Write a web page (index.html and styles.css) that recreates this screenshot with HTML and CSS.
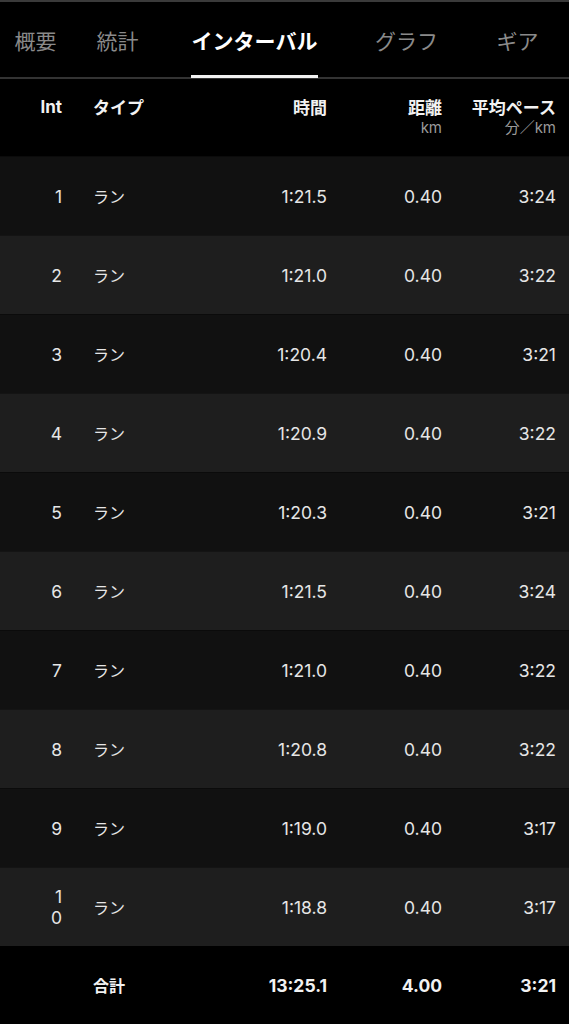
FILE: index.html
```html
<!DOCTYPE html>
<html lang="ja">
<head>
<meta charset="utf-8">
<link rel="stylesheet" href="styles.css">
</head>
<body>
<div class="topline"></div>
<nav class="tabs">
  <div class="tab t1">概要</div>
  <div class="tab t2">統計</div>
  <div class="tab t3 active">インターバル</div>
  <div class="tab t4">グラフ</div>
  <div class="tab t5">ギア</div>
</nav>
<div class="table">
  <div class="row head">
    <div class="c int">Int</div>
    <div class="c type">タイプ</div>
    <div class="c num">時間</div>
    <div class="c num">距離<span class="unit">km</span></div>
    <div class="c num">平均ペース<span class="unit">分／km</span></div>
  </div>
  <div class="row odd"><div class="c int"><span class="n">1</span></div><div class="c type">ラン</div><div class="c num">1:21.5</div><div class="c num">0.40</div><div class="c num">3:24</div></div>
  <div class="row even"><div class="c int"><span class="n">2</span></div><div class="c type">ラン</div><div class="c num">1:21.0</div><div class="c num">0.40</div><div class="c num">3:22</div></div>
  <div class="row odd"><div class="c int"><span class="n">3</span></div><div class="c type">ラン</div><div class="c num">1:20.4</div><div class="c num">0.40</div><div class="c num">3:21</div></div>
  <div class="row even"><div class="c int"><span class="n">4</span></div><div class="c type">ラン</div><div class="c num">1:20.9</div><div class="c num">0.40</div><div class="c num">3:22</div></div>
  <div class="row odd"><div class="c int"><span class="n">5</span></div><div class="c type">ラン</div><div class="c num">1:20.3</div><div class="c num">0.40</div><div class="c num">3:21</div></div>
  <div class="row even"><div class="c int"><span class="n">6</span></div><div class="c type">ラン</div><div class="c num">1:21.5</div><div class="c num">0.40</div><div class="c num">3:24</div></div>
  <div class="row odd"><div class="c int"><span class="n">7</span></div><div class="c type">ラン</div><div class="c num">1:21.0</div><div class="c num">0.40</div><div class="c num">3:22</div></div>
  <div class="row even"><div class="c int"><span class="n">8</span></div><div class="c type">ラン</div><div class="c num">1:20.8</div><div class="c num">0.40</div><div class="c num">3:22</div></div>
  <div class="row odd"><div class="c int"><span class="n">9</span></div><div class="c type">ラン</div><div class="c num">1:19.0</div><div class="c num">0.40</div><div class="c num">3:17</div></div>
  <div class="row even"><div class="c int"><span class="n">10</span></div><div class="c type">ラン</div><div class="c num">1:18.8</div><div class="c num">0.40</div><div class="c num">3:17</div></div>
  <div class="row total"><div class="c int"></div><div class="c type">合計</div><div class="c num">13:25.1</div><div class="c num">4.00</div><div class="c num">3:21</div></div>
</div>
</body>
</html>
```
FILE: styles.css
```css
html, body {
  margin: 0;
  padding: 0;
  background: #000;
}
body {
  width: 569px;
  height: 1024px;
  overflow: hidden;
  font-family: Inter, "Noto Sans CJK JP", sans-serif;
  color: #e6e6e6;
}
.topline {
  height: 2px;
  background: #3a3a3a;
}
.tabs {
  height: 75px;
  display: flex;
  align-items: stretch;
  padding-left: 14px;
  border-bottom: 2px solid #333;
}
.tab {
  font-family: "Noto Sans CJK JP", sans-serif;
  font-size: 21px;
  color: #8a8a8a;
  display: flex;
  align-items: center;
  justify-content: center;
  padding-top: 3px;
  box-sizing: border-box;
  border-bottom: 3px solid transparent;
  margin-bottom: -1px;
  white-space: nowrap;
}
.t1 { width: 43px; }
.t2 { width: 43px; margin-left: 39px; }
.t3 { width: 127px; margin-left: 52px; }
.t4 { width: 63px; margin-left: 57px; }
.t5 { width: 43px; margin-left: 58px; }
.tab.active {
  color: #fff;
  font-weight: 700;
  border-bottom-color: #f2f2f2;
}
.row {
  display: grid;
  grid-template-columns: 62px 165px 100px 115px 114px;
  padding-right: 13px;
  height: 79px;
  align-items: center;
  font-size: 17.5px;
}
.row.odd { background: #111; border-top: 1px solid #0b0b0b; box-sizing: border-box; }
.row.even { background: #1e1e1e; border-top: 1px solid #141414; box-sizing: border-box; }
.c { line-height: 21px; }
.int { text-align: right; display: flex; justify-content: flex-end; }
.n {
  display: block;
  width: 12px;
  word-break: break-all;
  text-align: right;
}
.type {
  padding-left: 31px;
  font-family: "Noto Sans CJK JP", sans-serif;
  font-size: 16px;
}
.num { text-align: right; }
.head {
  height: 77px;
  align-items: start;
  padding-top: 16px;
  box-sizing: border-box;
  font-weight: 700;
  color: #f2f2f2;
}
.head .c { font-family: "Noto Sans CJK JP", sans-serif; font-size: 17px; line-height: 24px; }
.head .int { font-family: Inter, sans-serif; }
.unit {
  display: block;
  font-family: Inter, "Noto Sans CJK JP", sans-serif;
  font-weight: 400;
  font-size: 15px;
  color: #9a9a9a;
  line-height: 18px;
}
.total {
  background: #000;
  height: 78px;
  font-weight: 700;
  color: #f2f2f2;
}
.total .type { font-size: 16px; }
```
